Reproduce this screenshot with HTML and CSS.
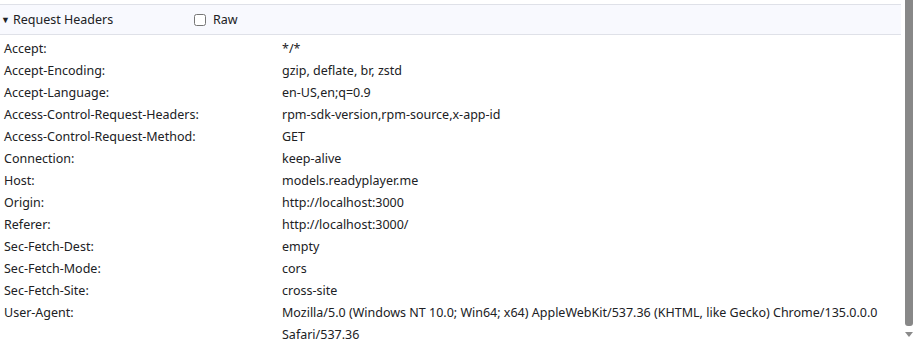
FILE: index.html
```html
<!DOCTYPE html>
<html lang="en">
<head>
    <meta charset="UTF-8">
    <title>Request Headers</title>
    <link rel="stylesheet" href="styles.css">
</head>
<body>
    <div class="pane">
        <div class="content">
            <div class="section-header">
                <span class="toggle">&#9660;</span>
                <span class="title">Request Headers</span>
                <label class="raw"><input type="checkbox"> Raw</label>
            </div>
            <div class="rows">
                <div class="row"><div class="name">Accept:</div><div class="value">*/*</div></div>
                <div class="row"><div class="name">Accept-Encoding:</div><div class="value">gzip, deflate, br, zstd</div></div>
                <div class="row"><div class="name">Accept-Language:</div><div class="value">en-US,en;q=0.9</div></div>
                <div class="row"><div class="name">Access-Control-Request-Headers:</div><div class="value">rpm-sdk-version,rpm-source,x-app-id</div></div>
                <div class="row"><div class="name">Access-Control-Request-Method:</div><div class="value">GET</div></div>
                <div class="row"><div class="name">Connection:</div><div class="value">keep-alive</div></div>
                <div class="row"><div class="name">Host:</div><div class="value">models.readyplayer.me</div></div>
                <div class="row"><div class="name">Origin:</div><div class="value">http://localhost:3000</div></div>
                <div class="row"><div class="name">Referer:</div><div class="value">http://localhost:3000/</div></div>
                <div class="row"><div class="name">Sec-Fetch-Dest:</div><div class="value">empty</div></div>
                <div class="row"><div class="name">Sec-Fetch-Mode:</div><div class="value">cors</div></div>
                <div class="row"><div class="name">Sec-Fetch-Site:</div><div class="value">cross-site</div></div>
                <div class="row"><div class="name">User-Agent:</div><div class="value">Mozilla/5.0 (Windows NT 10.0; Win64; x64) AppleWebKit/537.36 (KHTML, like Gecko) Chrome/135.0.0.0 Safari/537.36</div></div>
            </div>
        </div>
        <div class="scrollbar">
            <div class="thumb"></div>
            <div class="arrow"></div>
        </div>
    </div>
</body>
</html>
```

FILE: styles.css
```css
html, body {
    margin: 0;
    padding: 0;
    background: white;
    overflow: hidden;
}
body {
    font-family: "Noto Sans", "Open Sans", sans-serif;
    font-size: 12.5px;
    color: #202124;
}
.pane {
    display: flex;
    height: 346px;
}
.content {
    flex: 1 1 0;
    padding-top: 4px;
    min-width: 0;
}
.section-header {
    display: flex;
    align-items: center;
    height: 29px;
    background: #f8f9fe;
    border-top: 1px solid #dfe1e8;
    border-bottom: 1px solid #dfe1e8;
    margin-right: 3px;
}
.toggle {
    font-size: 9px;
    width: 13px;
    padding-left: 1px;
    box-sizing: border-box;
    color: #202124;
}
.title {
    width: 181px;
}
.raw {
    display: flex;
    align-items: center;
    gap: 7px;
}
.raw input {
    margin: 0;
    width: 12px;
    height: 12px;
}
.rows {
    padding-top: 3px;
}
.row {
    display: flex;
    line-height: 22px;
}
.name {
    width: 278px;
    padding-left: 4px;
    flex-shrink: 0;
}
.value {
    flex: 1;
    padding-right: 20px;
}
.scrollbar {
    flex: 0 0 9px;
    display: flex;
    flex-direction: column;
    align-items: flex-end;
}
.thumb {
    flex: 0 0 326px;
    width: 8px;
    background-color: #888888;
    border-bottom-left-radius: 3px;
    border-bottom-right-radius: 3px;
}
.arrow {
    margin: 6px 0 0 0;
    align-self: center;
    width: 0;
    height: 0;
    border-left: 4px solid transparent;
    border-right: 4px solid transparent;
    border-top: 5px solid #8a8a8a;
}
```
